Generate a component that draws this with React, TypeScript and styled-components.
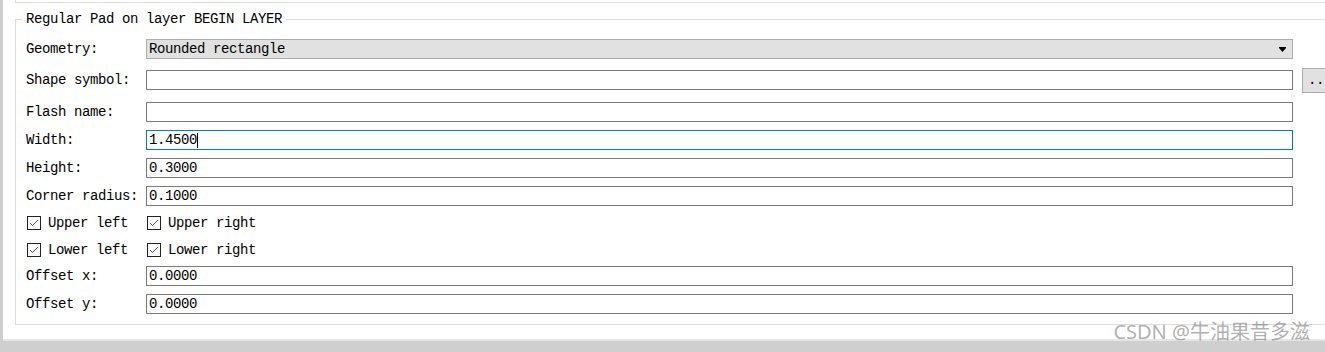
import styled, { createGlobalStyle } from "styled-components";

const GlobalStyle = createGlobalStyle`
  html, body {
    margin: 0;
    padding: 0;
    background: #cfcfcf;
    overflow: hidden;
  }
  body {
    font-family: "Liberation Mono", "DejaVu Sans Mono", monospace;
    font-size: 14px;
    letter-spacing: -0.4px;
    color: #000;
  }
`;

const Window = styled.div`
  position: relative;
  width: 1325px;
  height: 352px;
  background: #cfcfcf;
  overflow: hidden;
`;

const Panel = styled.div`
  margin-left: 3px;
  width: 1360px;
  height: 341px;
  padding-left: 12px;
  box-sizing: border-box;
  background: #fff;
  border-bottom: 2px solid #e6e6e6;
  overflow: hidden;
`;

const PrevGroup = styled.div`
  height: 2px;
  border-left: 1px solid #dcdcdc;
  border-bottom: 1px solid #dcdcdc;
`;

const GroupBox = styled.fieldset`
  margin: 8px 0 0 0;
  padding: 11px 0 10px 10px;
  border: 1px solid #dcdcdc;
  min-width: 0;
`;

const Legend = styled.legend`
  margin-left: -4px;
  padding: 0 4px;
  line-height: 17px;
`;

const Row = styled.div<{ $top?: number; $h?: number }>`
  display: flex;
  align-items: center;
  height: ${(p) => p.$h ?? 20}px;
  margin-top: ${(p) => p.$top ?? 0}px;
`;

const Label = styled.div`
  width: 120px;
  flex: none;
  line-height: 20px;
  white-space: nowrap;
`;

const Field = styled.div<{ $focused?: boolean }>`
  position: relative;
  display: flex;
  align-items: center;
  width: 1147px;
  height: 20px;
  flex: none;
  box-sizing: border-box;
  padding-left: 2px;
  background: #fff;
  border: 1px solid ${(p) => (p.$focused ? "#0078d7" : "#7a7a7a")};
  white-space: nowrap;
`;

const Combo = styled(Field)`
  justify-content: space-between;
  padding-right: 6px;
  background: #e1e1e1;
  border-color: #adadad;
`;

const Caret = styled.span`
  display: inline-block;
  width: 1px;
  height: 15px;
  background: #000;
`;

const BrowseButton = styled.div`
  flex: none;
  width: 36px;
  height: 25px;
  margin-left: 9px;
  box-sizing: border-box;
  background: #e1e1e1;
  border: 1px solid #adadad;
  text-align: center;
  line-height: 23px;
`;

const CheckItem = styled.div<{ $w?: number }>`
  display: flex;
  align-items: center;
  gap: 7px;
  width: ${(p) => p.$w ?? 120}px;
  flex: none;
  padding-left: 1px;
  box-sizing: border-box;
  white-space: nowrap;
`;

const Watermark = styled.div`
  position: absolute;
  right: 15px;
  bottom: 7px;
  font-family: "Noto Sans", "Noto Sans CJK SC", sans-serif;
  font-size: 20px;
  letter-spacing: 0;
  color: rgba(110, 110, 110, 0.55);
`;

function ComboArrow() {
  return (
    <svg width="7" height="5" viewBox="0 0 7 5">
      <rect x="0" y="0" width="7" height="1" fill="#000" />
      <polygon points="0,1 7,1 3.5,5" fill="#000" />
    </svg>
  );
}

function CheckBox() {
  return (
    <svg width="14" height="14" viewBox="0 0 14 14">
      <rect x="0.5" y="0.5" width="13" height="13" fill="#fff" stroke="#222" />
      <polyline points="3,7 5.5,9.5 11,4" fill="none" stroke="#555" strokeWidth="1" />
    </svg>
  );
}

function Check({ text, w }: { text: string; w?: number }) {
  return (
    <CheckItem $w={w}>
      <CheckBox />
      <span>{text}</span>
    </CheckItem>
  );
}

function TextRow({ label, value, top, focused }: { label: string; value?: string; top: number; focused?: boolean }) {
  return (
    <Row $top={top}>
      <Label>{label}</Label>
      <Field $focused={focused}>
        {value}
        {focused && <Caret />}
      </Field>
    </Row>
  );
}

export default function App() {
  return (
    <Window>
      <GlobalStyle />
      <Panel>
        <PrevGroup />
        <GroupBox>
          <Legend>Regular Pad on layer BEGIN LAYER</Legend>
          <Row>
            <Label>Geometry:</Label>
            <Combo>
              <span>Rounded rectangle</span>
              <ComboArrow />
            </Combo>
          </Row>
          <Row $top={11}>
            <Label>Shape symbol:</Label>
            <Field />
            <BrowseButton>...</BrowseButton>
          </Row>
          <TextRow label="Flash name:" top={12} />
          <TextRow label="Width:" value="1.4500" top={8} focused />
          <TextRow label="Height:" value="0.3000" top={8} />
          <TextRow label="Corner radius:" value="0.1000" top={8} />
          <Row $top={9} $h={16}>
            <Check text="Upper left" />
            <Check text="Upper right" w={160} />
          </Row>
          <Row $top={11} $h={16}>
            <Check text="Lower left" />
            <Check text="Lower right" w={160} />
          </Row>
          <TextRow label="Offset x:" value="0.0000" top={8} />
          <TextRow label="Offset y:" value="0.0000" top={8} />
        </GroupBox>
      </Panel>
      <Watermark>CSDN @牛油果昔多滋</Watermark>
    </Window>
  );
}
